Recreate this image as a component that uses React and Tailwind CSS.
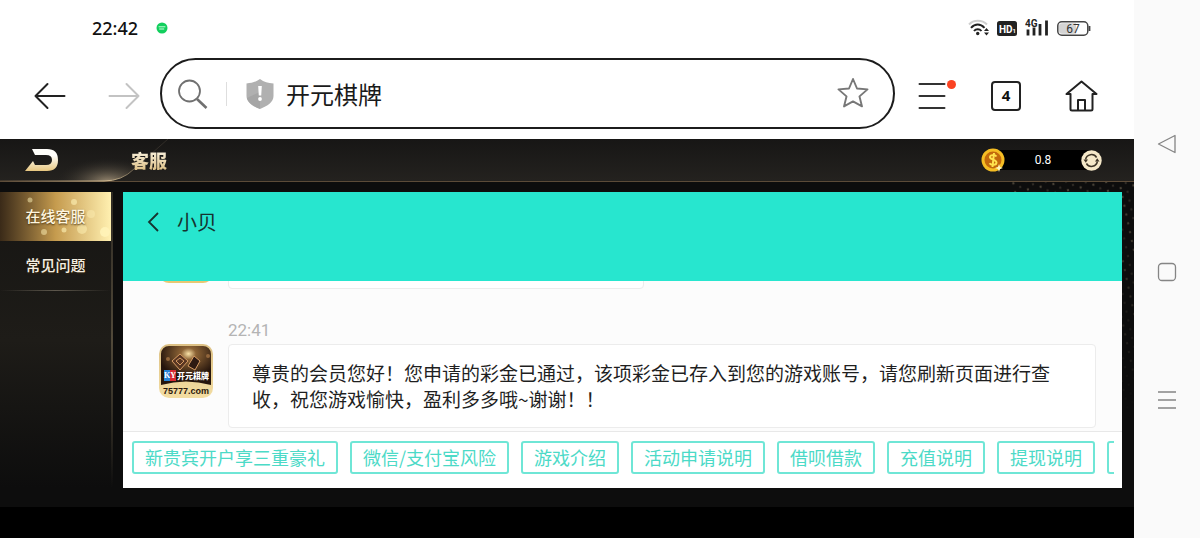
import React, { useState } from 'react';

const quickTags = [
  '新贵宾开户享三重豪礼',
  '微信/支付宝风险',
  '游戏介绍',
  '活动申请说明',
  '借呗借款',
  '充值说明',
  '提现说明'
];

const menuItems = ['在线客服', '常见问题'];

const StatusBar = () => (
  <div className="flex h-14 items-center justify-between pl-[92px] pr-[43px]">
    <div className="flex items-center gap-[18px]">
      <span className="font-['Noto_Sans'] text-lg font-medium text-[#111]">22:42</span>
      <svg className="h-3 w-3" viewBox="0 0 12 12">
        <circle cx="6" cy="6" r="5.5" fill="#12cf5d" />
        <path d="M3 4.8h6M3.6 7h4.2" stroke="#c9ffdd" strokeWidth="1" strokeLinecap="round" />
      </svg>
    </div>
    <div className="flex items-center gap-2">
      <svg className="h-5 w-[21px]" viewBox="0 0 21 20" fill="none" strokeWidth="2">
        <path d="M1 6.500C5.500 1.600 14 1.600 19 6.500" stroke="#cfcfcf" />
        <path d="M3 9.800C7 5.400 12.500 5.400 16.500 9.800" stroke="#222" />
        <path d="M6 13C8 10.500 11.500 10.500 13.500 13" stroke="#222" />
        <circle cx="9.700" cy="15.500" r="1.700" fill="#222" />
        <path d="M16 13l2.500-3 2.500 3zM16 14.500l2.500 3 2.500-3z" fill="#222" />
      </svg>
      <svg className="h-[15px] w-5" viewBox="0 0 20 15">
        <rect width="20" height="15" rx="2.500" fill="#222" />
        <text x="2" y="11.500" fill="#fff" fontSize="10" fontWeight="700" fontFamily="Roboto, sans-serif">HD</text>
        <text x="15.500" y="11.500" fill="#fff" fontSize="6" fontWeight="700" fontFamily="Roboto, sans-serif">1</text>
      </svg>
      <svg className="h-5 w-6" viewBox="0 0 24 20">
        <text x="0" y="8.500" fill="#222" fontSize="10" fontWeight="700" fontFamily="Roboto, sans-serif">4G</text>
        <path d="M3 11.500v6M9 9.500v8M15 6v11.500M21.500 2.500v15" stroke="#222" strokeWidth="2.800" />
      </svg>
      <svg className="h-[15px] w-[34px]" viewBox="0 0 34 15">
        <rect x="0.800" y="0.800" width="30" height="13.400" rx="4" fill="#fff" stroke="#444" strokeWidth="1.500" />
        <path d="M5 2.200h14v10.600h-14a3 3 0 0 1-3-3v-4.600a3 3 0 0 1 3-3z" fill="#d4d4d4" />
        <path d="M32.500 5v5" stroke="#444" strokeWidth="1.800" />
        <text x="16" y="12" textAnchor="middle" fill="#333" fontSize="12" fontFamily="Roboto, sans-serif">67</text>
      </svg>
    </div>
  </div>
);

const BrowserBar = () => {
  const [address, setAddress] = useState('开元棋牌');

  return (
    <div className="flex items-center pt-0.5 pr-9 pb-2.5 pl-[34px]">
      <button type="button" aria-label="后退" className="mt-1">
        <svg className="h-7 w-8" viewBox="0 0 32 28" fill="none" stroke="#222" strokeWidth="2" strokeLinecap="round" strokeLinejoin="round">
          <path d="M13.500 2L1.500 14l12 12M1.500 14h29" />
        </svg>
      </button>
      <button type="button" aria-label="前进" className="mt-1 ml-[42px]">
        <svg className="h-7 w-8" viewBox="0 0 32 28" fill="none" stroke="#c3c3c3" strokeWidth="2" strokeLinecap="round" strokeLinejoin="round">
          <path d="M18.500 2l12 12-12 12M30.500 14h-29" />
        </svg>
      </button>
      <div className="ml-5 flex h-[71px] min-w-0 flex-1 items-center rounded-full border-2 border-[#1c1c1c] bg-white pr-6 pl-4">
        <svg className="h-[30px] w-[30px] shrink-0" viewBox="0 0 30 30" fill="none" stroke="#707070" strokeWidth="1.800">
          <circle cx="11.500" cy="12" r="10.500" />
          <path d="M19 20l9.500 9" strokeWidth="2.600" />
        </svg>
        <div className="ml-[18px] h-6 w-px bg-[#dedede]" />
        <svg className="ml-[19px] h-[30px] w-7 shrink-0" viewBox="0 0 28 30">
          <path d="M14 0c4 3 8 4 13.500 4.500v12.500c0 6-6 10-13.500 13c-7.500-3-13.500-7-13.500-13V4.500C6 4 10 3 14 0z" fill="#b0b0b0" />
          <path d="M1 19L14 13v17C7 27.500 2 24 1 19z" fill="#999" opacity=".5" />
          <path d="M12.200 7h3.600l-.6 9.500h-2.400z" fill="#fff" />
          <circle cx="14" cy="20" r="1.900" fill="#fff" />
        </svg>
        <input
          type="text"
          aria-label="地址栏"
          value={address}
          onChange={(e) => setAddress(e.target.value)}
          className="ml-3 min-w-0 flex-1 bg-transparent text-2xl text-[#1a1a1a] outline-none"
        />
        <button type="button" aria-label="收藏" className="-mt-0.5">
          <svg className="h-[30px] w-8" viewBox="0 0 32 30" fill="none" stroke="#777" strokeWidth="1.900" strokeLinejoin="round">
            <path d="M16 1l4 9.500 10.500.900-8 7 2.500 10-9-5-9 5 2.500-10-8-7L12 10.500z" />
          </svg>
        </button>
      </div>
      <button type="button" aria-label="菜单" className="relative mt-1 ml-[23px]">
        <svg className="h-7 w-7" viewBox="0 0 28 28" stroke="#333" strokeWidth="2" strokeLinecap="round">
          <path d="M1.500 2h25M1.500 14h25M1.500 26h25" />
        </svg>
        <span className="absolute -top-0.5 -right-2.5 h-[9px] w-[9px] rounded-full bg-[#fb4322]" />
      </button>
      <button
        type="button"
        aria-label="标签页"
        className="mt-1 ml-[45px] h-[30px] w-[30px] rounded-sm border-2 border-[#222] font-['Noto_Sans'] text-[15px] leading-none font-bold text-[#111]"
      >
        4
      </button>
      <button type="button" aria-label="主页" className="mt-1 ml-11">
        <svg className="h-8 w-[33px]" viewBox="0 0 33 32" fill="none" stroke="#222" strokeWidth="2" strokeLinejoin="round" strokeLinecap="round">
          <path d="M5.500 14v15a1.500 1.500 0 0 0 1.500 1.500h19a1.500 1.500 0 0 0 1.500-1.500V14h4L16.500 1.500 1.500 14z" />
          <path d="M13 30V20h7v10" />
        </svg>
      </button>
    </div>
  );
};

const GameHeader = () => (
  <header className="relative flex h-[43px] items-center border-b border-[#5c4b38] bg-linear-to-b from-[#171615] to-[#24221f] pr-8 pl-6">
    <svg className="absolute top-0 left-0 h-[43px] w-[180px]" viewBox="0 0 180 43" fill="none">
      <defs>
        <radialGradient id="shine" cx="0" cy="0" r="1" gradientUnits="userSpaceOnUse" gradientTransform="translate(108 43) scale(52 24)">
          <stop offset="0" stopColor="#c4b090" stopOpacity=".75" />
          <stop offset="1" stopColor="#2a2723" stopOpacity="0" />
        </radialGradient>
        <linearGradient id="edge" x1="0" x2="180" y1="0" y2="0" gradientUnits="userSpaceOnUse">
          <stop offset="0" stopColor="#5c4b38" />
          <stop offset=".6" stopColor="#d8c197" />
          <stop offset=".85" stopColor="#4a4238" stopOpacity=".5" />
        </linearGradient>
      </defs>
      <path d="M0 0H168L134 30Q122 42 104 42H0z" fill="url(#shine)" />
      <path d="M0 42H104Q122 42 134 30L168 0" stroke="url(#edge)" />
    </svg>
    <button type="button" aria-label="返回" className="relative">
      <svg className="h-6 w-[35px]" viewBox="0 0 35 24">
        <defs>
          <linearGradient id="back" x1="0" x2="0" y1="0" y2="1">
            <stop offset="0.300" stopColor="#fffefa" />
            <stop offset="1" stopColor="#e8c77f" />
          </linearGradient>
        </defs>
        <path d="M8 1h15Q34 1 34 12T23 23H1L9 13l2 4h11q6 0 6-5t-6-5H11z" fill="url(#back)" />
      </svg>
    </button>
    <h1 className="relative ml-[72px] flex-1 bg-linear-to-b from-[#fffdf2] to-[#d8b775] bg-clip-text text-lg font-black text-transparent">
      客服
    </h1>
    <div className="flex items-center">
      <svg className="relative z-10 -mr-3 h-6 w-6" viewBox="0 0 24 24">
        <circle cx="12" cy="12" r="11.500" fill="#f5bd23" />
        <circle cx="12" cy="12" r="8.500" fill="#c2690c" />
        <path d="M15.500 8.500C14 6.500 8.500 6.500 9 9.500c.4 2.400 6.500 2 6.500 5 0 3-5.500 3-7 .8M13 5l-1.500 14" fill="none" stroke="#ffe34f" strokeWidth="2" />
        <path d="M17 19l1-3 1 3 3 1-3 1-1 3-1-3-3-1z" fill="#fff5bb" />
      </svg>
      <div className="flex h-5 w-[98px] items-center justify-center bg-black font-[Roboto] text-xs text-white">
        <span className="pl-0.5">0.8</span>
      </div>
      <button type="button" aria-label="刷新余额" className="relative -ml-2.5">
        <svg className="h-[21px] w-[21px]" viewBox="0 0 21 21" fill="none">
          <circle cx="10.500" cy="10.500" r="10.200" fill="#f5e8c8" />
          <path d="M4.600 9.500a6 6 0 0 1 11-2M16.400 11.500a6 6 0 0 1-11 2" stroke="#3d3426" strokeWidth="1.500" />
          <path d="M2.500 9.500h4.500l-2.200 3.300zM18.500 11.500h-4.500l2.200-3.300z" fill="#3d3426" />
        </svg>
      </button>
    </div>
  </header>
);

const Sidebar = ({ active, onSelect }) => (
  <nav className="relative w-[113px] shrink-0 bg-linear-to-b from-[#161513] via-[#1e1c18] to-[#0d0d0d]">
    <div className="absolute inset-y-0 right-0 w-0.5 bg-linear-to-b from-[#2d2922] via-[#51493a] to-transparent" />
    {menuItems.map((item) => (
      <button
        key={item}
        type="button"
        onClick={() => onSelect(item)}
        className={`relative flex h-[49px] w-[111px] items-center justify-center text-[15px] font-medium ${
          item === active
            ? 'bg-linear-to-r from-[#3a2a18] via-[#c59b4e] to-[#fff0b0] text-[#fff6df]'
            : 'text-[#f5efe2]'
        }`}
      >
        {item === active && (
          <svg className="absolute inset-0 h-full w-full" viewBox="0 0 111 49" fill="#fff3b8">
            <circle cx="30" cy="8" r="2.500" opacity=".5" />
            <circle cx="74" cy="10" r="3" opacity=".6" />
            <circle cx="44" cy="40" r="3" opacity=".5" />
            <circle cx="64" cy="38" r="2.500" opacity=".6" />
            <circle cx="82" cy="37" r="5" opacity=".5" />
            <circle cx="91" cy="22" r="4" opacity=".4" />
            <circle cx="105" cy="40" r="5" opacity=".9" />
          </svg>
        )}
        <span className="relative text-shadow-[0_1px_2px_rgb(60_40_10/0.900)]">{item}</span>
      </button>
    ))}
    <div className="h-px w-[111px] bg-linear-to-r from-transparent via-[#5d574c] to-transparent" />
  </nav>
);

const Avatar = () => (
  <svg className="h-[54px] w-[54px] shrink-0" viewBox="0 0 54 54" role="img" aria-label="客服头像">
    <defs>
      <linearGradient id="gold" x1="0" x2="0" y1="0" y2="1">
        <stop offset="0" stopColor="#dcc084" />
        <stop offset="1" stopColor="#f3dda2" />
      </linearGradient>
      <radialGradient id="glow" cx=".55" cy=".2" r=".6">
        <stop offset="0" stopColor="#fbe3a8" />
        <stop offset=".25" stopColor="#8c6335" />
        <stop offset="1" stopColor="#24140c" />
      </radialGradient>
    </defs>
    <rect width="54" height="54" rx="10" fill="url(#gold)" />
    <path d="M2 10a8 8 0 0 1 8-8h34a8 8 0 0 1 8 8v31Q27 34 2 41z" fill="url(#glow)" />
    <path d="M13 17l8-7 8 7-8 9z" fill="#593622" stroke="#d69c65" />
    <path d="M29 22l6-10 6 5-5 9z" fill="#2e1a12" stroke="#d69c65" />
    <path d="M17 17l4-3 4 3-4 4z" fill="none" stroke="#d69c65" />
    <circle cx="9" cy="15" r="2" fill="#92663b" />
    <circle cx="49" cy="12" r="2" fill="#92663b" />
    <path d="M5 26h6v11H5z" fill="#2784d7" />
    <path d="M11 26h6v11h-6z" fill="#d62a33" />
    <text x="5" y="34" fontSize="8" fontWeight="700" fill="#fff" fontFamily="Liberation Serif, serif">KY</text>
    <text x="18" y="35" fontSize="8" fontWeight="900" fill="#fff" fontFamily="Noto Sans CJK SC, sans-serif">开元棋牌</text>
    <text x="27" y="50" textAnchor="middle" fontSize="9" fontWeight="700" fill="#2a170b" fontFamily="Liberation Sans, sans-serif">75777.com</text>
  </svg>
);

const ChatPanel = () => (
  <section className="relative mr-3 ml-2.5 flex min-w-0 flex-1 flex-col bg-[#fcfcfc]">
    <div className="flex h-[89px] items-start bg-[#27e6cf] pt-4 pl-6 text-[#16332f]">
      <button type="button" aria-label="返回" className="mt-1">
        <svg className="h-5 w-3" viewBox="0 0 12 20" fill="none" stroke="currentColor" strokeWidth="1.800">
          <path d="M11 1L2 10l9 9" />
        </svg>
      </button>
      <h2 className="ml-[18px] text-xl">小贝</h2>
    </div>

    <div className="flex h-[150px] flex-col justify-end overflow-hidden pr-[26px] pb-[3px] pl-9">
      <div className="flex shrink-0 items-start gap-[15px]">
        <div className="h-[54px] w-[54px] rounded-[10px] border-2 border-[#e9c873] bg-[#f6e3b0]" />
        <div className="h-[60px] w-[416px] rounded border border-[#ececec] bg-white" />
      </div>
      <time className="mt-[31px] ml-[69px] font-[Roboto] text-[17px] leading-5 text-[#b4b4b4]">22:41</time>
      <div className="mt-1 flex shrink-0 items-start gap-[15px]">
        <Avatar />
        <p className="flex-1 rounded border border-[#ececec] bg-white pt-[15px] pr-7 pb-[15px] pl-[23px] text-[19px] leading-[26px] text-[#1f1f1f]">
          尊贵的会员您好！您申请的彩金已通过，该项彩金已存入到您的游戏账号，请您刷新页面进行查收，祝您游戏愉快，盈利多多哦~谢谢！！
        </p>
      </div>
    </div>

    <div className="h-[57px] border-t border-[#e8e8e8] bg-white px-2 pt-[9px]">
      <div className="flex gap-3 overflow-hidden pl-px">
        {quickTags.map((tag) => (
          <button
            key={tag}
            type="button"
            className="h-[33px] shrink-0 rounded-[3px] border-2 border-[#6fe6d6] px-[11px] pb-0.5 text-lg leading-none whitespace-nowrap text-[#4cdac7]"
          >
            {tag}
          </button>
        ))}
        <button type="button" aria-label="更多" className="h-[33px] w-24 shrink-0 rounded-[3px] border-2 border-[#6fe6d6]" />
      </div>
    </div>
  </section>
);

const SystemNav = () => (
  <aside className="flex w-[66px] shrink-0 flex-col items-center justify-center gap-[108px] bg-[#fafafa] pt-1.5">
    <button type="button" aria-label="系统返回">
      <svg className="h-5 w-5" viewBox="0 0 20 20" fill="none" stroke="#858585" strokeWidth="1.300" strokeLinejoin="round">
        <path d="M1.500 10L18 1.500v17z" />
      </svg>
    </button>
    <button type="button" aria-label="系统主屏">
      <svg className="h-5 w-5" viewBox="0 0 20 20" fill="none" stroke="#858585" strokeWidth="1.300">
        <rect x="1.500" y="1.500" width="17" height="17" rx="3.500" />
      </svg>
    </button>
    <button type="button" aria-label="最近任务">
      <svg className="h-5 w-5" viewBox="0 0 20 20" stroke="#858585" strokeWidth="1.300">
        <path d="M1 2h18M1 10h18M1 18h18" />
      </svg>
    </button>
  </aside>
);

const App = () => {
  const [active, setActive] = useState('在线客服');

  return (
    <div className="flex min-h-screen bg-white font-['Noto_Sans_CJK_SC',sans-serif]">
      <main className="flex min-w-0 flex-1 flex-col">
        <StatusBar />
        <BrowserBar />
        <div className="flex flex-1 flex-col bg-black">
          <GameHeader />
          <div className="relative flex bg-[#0d0d0d] pt-2.5 pb-[19px]">
            {/* faint gold dots behind the panel corner */}
            <svg className="absolute top-0 right-0 h-[240px] w-[124px]">
              <defs>
                <pattern id="dots" width="13" height="9" patternUnits="userSpaceOnUse" patternTransform="rotate(-12)">
                  <circle cx="3" cy="2" r="1.200" fill="#4a4337" />
                  <circle cx="9" cy="7" r="1.200" fill="#302c26" />
                </pattern>
                <linearGradient id="fade" x1="0" x2="0" y1="0" y2="1">
                  <stop offset="0" stopColor="#fff" />
                  <stop offset="1" stopColor="#000" />
                </linearGradient>
                <mask id="fadeMask">
                  <rect width="100%" height="100%" fill="url(#fade)" />
                </mask>
              </defs>
              <rect width="100%" height="100%" fill="url(#dots)" mask="url(#fadeMask)" />
            </svg>
            <Sidebar active={active} onSelect={setActive} />
            <ChatPanel />
          </div>
        </div>
      </main>
      <SystemNav />
    </div>
  );
};

export default App;
